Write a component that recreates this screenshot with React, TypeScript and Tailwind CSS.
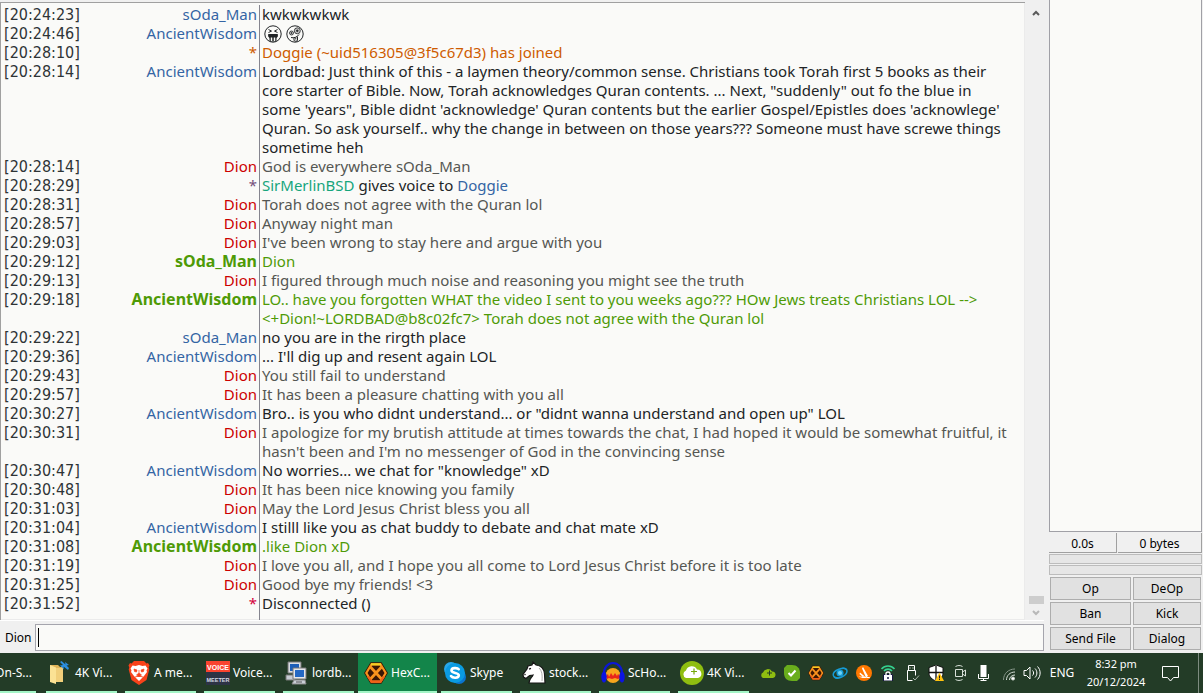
import { useState } from "react";
import type { ReactNode } from "react";

type Line = {
  time: string;
  nick: string;
  nickColor: string;
  text: ReactNode;
  color: string;
};

const BLUE = "text-[#3465a4]";
const RED = "text-[#cc0000]";
const ME = "text-[16px] text-[#4e9a06] font-bold";
const BLACK = "text-[#212426]";
const GREY = "text-[#555753]";
const GREEN = "text-[#4e9a06]";

const soda = (time: string, text: ReactNode): Line => ({ time, nick: "sOda_Man", nickColor: BLUE, text, color: BLACK });
const wisdom = (time: string, text: ReactNode): Line => ({ time, nick: "AncientWisdom", nickColor: BLUE, text, color: BLACK });
const dion = (time: string, text: ReactNode): Line => ({ time, nick: "Dion", nickColor: RED, text, color: GREY });
const highlight = (time: string, nick: string, text: ReactNode): Line => ({ time, nick, nickColor: ME, text, color: GREEN });

function Emojis() {
  return (
    <span className="flex h-[19px] items-center gap-1 pl-0.5">
      <svg width="18" height="18" viewBox="0 0 18 18" fill="none" stroke="#212426" role="img" aria-label="squinting face with tongue">
        <circle cx="9" cy="9" r="8.2" />
        <path d="M4.5 4.5l3 1.6-3 1.4M13.5 4.5l-3 1.6 3 1.4" />
        <path d="M4.500 9.500h9c0 2-.5 3-1.500 3.500V16H6v-3c-1-.5-1.500-1.500-1.500-3.500z" fill="#212426" />
        <path d="M7.500 12.500v3.500M10.500 12.500v3.500" stroke="#fafaf8" strokeWidth="1.500" />
      </svg>
      <svg width="18" height="18" viewBox="0 0 18 18" fill="none" stroke="#212426" role="img" aria-label="zany face">
        <circle cx="9" cy="9" r="8.2" />
        <circle cx="11.300" cy="5.800" r="3" fill="#c4c4c4" strokeWidth=".8" />
        <circle cx="5.500" cy="8" r="2" fill="#c4c4c4" strokeWidth=".8" />
        <circle cx="11.300" cy="5.800" r=".8" fill="#212426" />
        <circle cx="5.500" cy="8" r=".4" fill="#212426" />
        <path d="M5 12.500c3 .8 6-.2 8-3M8 12.500v2.700c0 1.400 3.500 1.400 3.500 0v-3.700M9.800 12.500v2" />
      </svg>
    </span>
  );
}

const lines: Line[] = [
  soda("20:24:23", "kwkwkwkwk"),
  wisdom("20:24:46", <Emojis />),
  { time: "20:28:10", nick: "*", nickColor: "text-[#ce5c00]", text: "Doggie (~uid516305@3f5c67d3) has joined", color: "text-[#ce5c00]" },
  wisdom(
    "20:28:14",
    <>
      Lordbad: Just think of this - a laymen theory/common sense. Christians took Torah first 5 books as their<br />
      core starter of Bible. Now, Torah acknowledges Quran contents. ... Next, "suddenly" out fo the blue in<br />
      some 'years", Bible didnt 'acknowledge' Quran contents but the earlier Gospel/Epistles does 'acknowlege'<br />
      Quran. So ask yourself.. why the change in between on those years??? Someone must have screwe things<br />
      sometime heh
    </>,
  ),
  dion("20:28:14", "God is everywhere sOda_Man"),
  {
    time: "20:28:29",
    nick: "*",
    nickColor: "text-[#75507b]",
    text: (
      <>
        <span className="text-[#16a57c]">SirMerlinBSD</span> gives voice to <span className={BLUE}>Doggie</span>
      </>
    ),
    color: BLACK,
  },
  dion("20:28:31", "Torah does not agree with the Quran lol"),
  dion("20:28:57", "Anyway night man"),
  dion("20:29:03", "I've been wrong to stay here and argue with you"),
  highlight("20:29:12", "sOda_Man", "Dion"),
  dion("20:29:13", "I figured through much noise and reasoning you might see the truth"),
  highlight(
    "20:29:18",
    "AncientWisdom",
    <>
      LO.. have you forgotten WHAT the video I sent to you weeks ago??? HOw Jews treats Christians LOL --&gt;<br />
      &lt;+Dion!~LORDBAD@b8c02fc7&gt; Torah does not agree with the Quran lol
    </>,
  ),
  soda("20:29:22", "no you are in the rirgth place"),
  wisdom("20:29:36", "... I'll dig up and resent again LOL"),
  dion("20:29:43", "You still fail to understand"),
  dion("20:29:57", "It has been a pleasure chatting with you all"),
  wisdom("20:30:27", 'Bro.. is you who didnt understand... or "didnt wanna understand and open up" LOL'),
  dion(
    "20:30:31",
    <>
      I apologize for my brutish attitude at times towards the chat, I had hoped it would be somewhat fruitful, it<br />
      hasn't been and I'm no messenger of God in the convincing sense
    </>,
  ),
  wisdom("20:30:47", 'No worries... we chat for "knowledge" xD'),
  dion("20:30:48", "It has been nice knowing you family"),
  dion("20:31:03", "May the Lord Jesus Christ bless you all"),
  wisdom("20:31:04", "I stilll like you as chat buddy to debate and chat mate xD"),
  highlight("20:31:08", "AncientWisdom", ".like Dion xD"),
  dion("20:31:19", "I love you all, and I hope you all come to Lord Jesus Christ before it is too late"),
  dion("20:31:25", "Good bye my friends! <3"),
  { time: "20:31:52", nick: "*", nickColor: "text-[#d4003c]", text: "Disconnected ()", color: BLACK },
];

function ChatLog() {
  return (
    <ol className="flex min-w-0 flex-1 flex-col border-t border-l border-[#a0a0a0] bg-[#fafaf8] pt-0.5 text-[15px] leading-[19px] shadow-[inset_-1px_-1px_0_#ebebeb]">
      {lines.map((l, i) => (
        <li key={i} className="flex last:flex-1">
          <div className="flex w-[259px] shrink-0 justify-between border-r border-[#85858f] pr-0.5 pl-[3px]">
            <time className="font-['DejaVu_Sans_Condensed',sans-serif] text-[16px] text-[#2e3436]">[{l.time}]</time>
            <span className={l.nickColor}>{l.nick}</span>
          </div>
          <div className={`min-w-0 flex-1 pl-0.5 whitespace-nowrap ${l.color}`}>{l.text}</div>
        </li>
      ))}
    </ol>
  );
}

function Scrollbar() {
  return (
    <div className="ml-[3px] flex w-4 flex-col items-center bg-[#f0f0f0] pt-2 pb-1">
      <svg width="8" height="6" viewBox="0 0 8 6" fill="none" stroke="#5a5a5a" strokeWidth="2">
        <path d="M1 5l3-3 3 3" />
      </svg>
      <div className="mt-auto mb-1.5 h-2 w-[15px] bg-[#cdcdcd]" />
      <svg width="8" height="6" viewBox="0 0 8 6" fill="none" stroke="#b8b8b8" strokeWidth="2">
        <path d="M1 1l3 3 3-3" />
      </svg>
    </div>
  );
}

function UserPane() {
  const buttons = ["Op", "DeOp", "Ban", "Kick", "Send File", "Dialog"];
  return (
    <aside className="flex w-[154px] shrink-0 flex-col pr-px text-[12px] text-black">
      <div className="flex-1 border-r border-b border-l border-[#a0a0a6] bg-[#fafaf8]" />
      <div className="mt-px flex h-5 gap-px text-center leading-[21px]">
        <div className="w-[68px] border-r border-b border-[#a0a0a0]">0.0s</div>
        <div className="flex-1 border-r border-b border-[#a0a0a0]">0 bytes</div>
      </div>
      <div className="mt-px h-2.5 border border-[#bcbcbc] bg-[#e6e6e6]" />
      <div className="mt-px h-2.5 border border-[#bcbcbc] bg-[#e6e6e6]" />
      <div className="grid grid-cols-[81px_1fr] gap-0.5 px-px pt-0.5 pb-[3px]">
        {buttons.map((b) => (
          <button key={b} type="button" className="h-[23px] border border-[#adadad] bg-[#e1e1e1] leading-[21px]">
            {b}
          </button>
        ))}
      </div>
    </aside>
  );
}

/* ---------- taskbar icons ---------- */

function FolderIcon() {
  return (
    <svg width="24" height="24" viewBox="0 0 24 24">
      <path d="M2 4h8l2 2h3v15H2z" fill="#e0b458" />
      <path d="M2 4l6 2.500V23l-6-2z" fill="#fbe294" />
      <path d="M8 7h7v14H8z" fill="#f1cf7a" />
      <path d="M12 1l1.500-1 4 3.500L17 1l4 3-2.500.5L21 7l-1 2-4.500-3.500.5 3-4-4 3-.5z" fill="#2b8ee0" />
    </svg>
  );
}

function BraveIcon() {
  return (
    <svg width="24" height="24" viewBox="0 0 24 24">
      <path d="M7 0h10l2.500 2.500L21 2l1.500 2.500-.8 2 .6 2L19.500 19 12 24l-7.500-5L1.700 8.500l.6-2-.8-2L3 2l1.500.5z" fill="#f8421a" />
      <path d="M5.500 4.500l3 .5L12 4l3.500 1 3-.5 2 3-1 2 .5 1.500-3 4-1.500 1.500L12 20l-3.500-3.500L7 15l-3-4 .5-1.500-1-2z" fill="#fff" />
      <path d="M7 8l3 1-.5 2-2-.5zM17 8l-3 1 .5 2 2-.5zM12 9v3l-2.500 2 2.500 1.500 2.500-1.500L12 12M8 16l4-1 4 1" fill="#f8421a" stroke="#f8421a" strokeWidth=".7" />
    </svg>
  );
}

function VoiceIcon() {
  return (
    <svg width="24" height="24" viewBox="0 0 24 24" fontFamily="'Liberation Sans', sans-serif" fontWeight="bold" textAnchor="middle">
      <path d="M0 0h24v12H0z" fill="#f9432f" />
      <path d="M0 11h24v13H0z" fill="#2d3345" />
      <text x="12" y="8.500" fontSize="7" fill="#fff">VOICE</text>
      <text x="12" y="20.500" fontSize="5.500" fill="#d5dae6">MEETER</text>
    </svg>
  );
}

function PuttyIcon() {
  return (
    <svg width="24" height="24" viewBox="0 0 24 24">
      <path d="M3 1h13v11H3z" fill="#d9dde2" stroke="#777" />
      <path d="M5 3h9v7H5z" fill="#1d5fb8" />
      <path d="M1 14h9v5H1z" fill="#c6cbd2" stroke="#777" />
      <path d="M8 7h13v11H8z" fill="#e4e7eb" stroke="#777" />
      <path d="M10 9h9v7h-9z" fill="#2468c4" />
      <path d="M9 19h11l1 4H7z" fill="#c9ced6" stroke="#888" />
      <path d="M11 21h6" stroke="#555" />
    </svg>
  );
}

function HexIcon({ size = 24 }: { size?: number }) {
  return (
    <svg width={size} height={size} viewBox="0 0 24 24">
      <path d="M7 2h10l6 10-6 10H7L1 12z" fill="#3a1604" stroke="#3a1604" strokeWidth="1.600" />
      <path d="M7.500 3.300h9l5.200 8.700-5.200 8.700h-9L2.300 12z" fill="none" stroke="#f9931d" strokeWidth="2.200" />
      <path d="M6 5.500l12 13M18 5.500l-12 13" stroke="#f9931d" strokeWidth="2.800" />
      <path d="M7 3.300h10" stroke="#f5cf25" strokeWidth="2.200" />
      <path d="M4 15.500l3.500 5.200h9l3.500-5.200" fill="none" stroke="#f0601a" strokeWidth="2.200" />
    </svg>
  );
}

function SkypeIcon() {
  return (
    <svg width="24" height="24" viewBox="0 0 24 24">
      <circle cx="8" cy="8" r="7" fill="#28a8ea" />
      <circle cx="16" cy="16" r="7" fill="#0b74cf" />
      <circle cx="12" cy="12" r="10" fill="#0a9be2" />
      <path d="M15.700 8.200C14.500 6.700 8.400 6.500 8.500 9.500c.1 3 7.300 1.800 7.300 4.800 0 3.200-6.300 3-7.800.8" fill="none" stroke="#fff" strokeWidth="2.600" strokeLinecap="round" />
    </svg>
  );
}

function HorseIcon() {
  return (
    <svg width="24" height="24" viewBox="0 0 24 24">
      <path d="M10 4l1-3 3 3c5 .5 8 4 8.500 9l.5 9H7c0-4 3-5.500 4-8-2 .5-3 0-4 1l-3 2.500-2.500-1.500L1 13.500 5 8l1-3z" fill="#fff" stroke="#161616" strokeWidth="1.200" />
      <path d="M7 8.200l2-.8M2.500 14l1-.8" stroke="#161616" strokeWidth="1.300" />
      <path d="M17 7c3 3 3.500 7 3 13" fill="none" stroke="#aaa" />
    </svg>
  );
}

function AudacityIcon() {
  return (
    <svg width="24" height="24" viewBox="0 0 24 24">
      <ellipse cx="12" cy="14.500" rx="7.500" ry="7.500" fill="#f7a51c" />
      <path d="M5 15l2-2 1 3 2-4 2 3 2-3 2 3 1-2 2 2v2l-2 1-3-1-3 1-3-1-2 1z" fill="#e8251b" />
      <path d="M3 14C2 -2 22 -2 21 14" fill="none" stroke="#0b17d8" strokeWidth="2.200" />
      <ellipse cx="3" cy="16" rx="2.700" ry="5.500" fill="#0c14e4" />
      <ellipse cx="21" cy="16" rx="2.700" ry="5.500" fill="#0c14e4" />
    </svg>
  );
}

function VideoIcon() {
  return (
    <svg width="24" height="24" viewBox="0 0 24 24">
      <circle cx="12" cy="12" r="12" fill="#8fbe10" />
      <path d="M6 17a4 4 0 010-7.500 6 6 0 0111-1 4.300 4.300 0 011 8.500z" fill="#fff" />
      <path d="M14 7.500v6M11 10.500h6" stroke="#74a80b" strokeWidth="1.200" />
    </svg>
  );
}

const tasks = [
  { label: "4K Vi...", icon: <FolderIcon /> },
  { label: "A me...", icon: <BraveIcon /> },
  { label: "Voice...", icon: <VoiceIcon /> },
  { label: "lordb...", icon: <PuttyIcon /> },
  { label: "HexC...", icon: <HexIcon />, active: true },
  { label: "Skype", icon: <SkypeIcon /> },
  { label: "stock...", icon: <HorseIcon /> },
  { label: "ScHo...", icon: <AudacityIcon /> },
  { label: "4K Vi...", icon: <VideoIcon /> },
];

const tray = [
  {
    name: "4K Download",
    icon: (
      <svg width="16" height="16" viewBox="0 0 16 16">
        <path d="M3 13a3 3 0 010-5.500 5 5 0 019-1 3.300 3.300 0 011 6.500z" fill="#8fbe10" />
        <path d="M9.500 5.500v5M7 8h5" stroke="#233c27" />
      </svg>
    ),
  },
  {
    name: "Skype status",
    icon: (
      <svg width="16" height="16" viewBox="0 0 16 16">
        <path d="M3 0h5c5 0 8 3 8 8v5l-3 3H8c-5 0-8-3-8-8V3z" fill="#69ad1c" />
        <path d="M4.500 8l2.500 2.500 4.500-5" fill="none" stroke="#fff" strokeWidth="2" />
      </svg>
    ),
  },
  { name: "HexChat", icon: <HexIcon size={16} /> },
  {
    name: "Monitor",
    icon: (
      <svg width="16" height="16" viewBox="0 0 16 16" fill="none" stroke="#169bd5" strokeWidth="1.500">
        <path d="M14 4.500C12 1.500 1 5 1.200 10c.2 2.500 4 3.200 5 3" />
        <path d="M2 12c3 3 13-1 13-6 0-2-2-3.500-5-2.500" />
        <circle cx="8" cy="8" r="2.800" fill="#6fd2f5" />
      </svg>
    ),
  },
  {
    name: "Avast",
    icon: (
      <svg width="16" height="16" viewBox="0 0 16 16">
        <circle cx="8" cy="8" r="8" fill="#ff7800" />
        <path d="M7 2l5 9-2 1.500L6 3.500zM4 7.500L9.500 12H7L3.500 9zM2.500 11.500l4 1.500h7.500l-.5-1z" fill="#fff" />
      </svg>
    ),
  },
  {
    name: "VPN",
    icon: (
      <svg width="16" height="16" viewBox="0 0 16 16" fill="none">
        <path d="M1.500 4C5 0 11 0 14.500 4M4 6c2-2.500 6-2.500 8 0" stroke="#35d18f" strokeWidth="1.600" />
        <path d="M3.500 9.500h9V16h-9z" fill="#fff" stroke="#15173f" />
        <path d="M6 10V8.500c0-2 4-2 4 0V10" stroke="#fff" strokeWidth="1.300" />
        <path d="M8 12v2" stroke="#15173f" strokeWidth="1.500" />
      </svg>
    ),
  },
  {
    name: "Safely remove hardware",
    icon: (
      <svg width="16" height="16" viewBox="0 0 16 16" fill="none" stroke="#fff">
        <path d="M4.500 5.500v-5h6v5M3.500 5.500h8v5M3.500 5.500v10h5M6 2.500v1M9 2.500v1" />
        <path d="M9 13l2 2 4-4.500" stroke="#a8b5aa" />
      </svg>
    ),
  },
  {
    name: "Windows Security",
    icon: (
      <svg width="16" height="16" viewBox="0 0 16 16">
        <path d="M8 0l7 2.500V8c0 4-3 6.500-7 8-4-1.500-7-4-7-8V2.500z" fill="#fff" stroke="#111" />
        <path d="M8 1v14M1 7.500h14" stroke="#111" strokeWidth="1.300" />
        <path d="M11.500 7.500L16 16H7z" fill="#ffc20e" />
        <path d="M11.500 10.500v3M11.500 14v1" stroke="#222" />
      </svg>
    ),
  },
  {
    name: "Camera",
    icon: (
      <svg width="16" height="16" viewBox="0 0 16 16" fill="none" stroke="#d8e0d9">
        <path d="M3.500 4.500h7v7h-7zM10.500 7l3-2v6l-3-2M3.500 1.500c2-1.300 5-1.300 7 0M3.500 14.500c2 1.300 5 1.300 7 0" />
      </svg>
    ),
  },
  {
    name: "Microphone",
    icon: (
      <svg width="16" height="16" viewBox="0 0 16 16" fill="none" stroke="#fff">
        <path d="M4.500 0h6v12h-6z" fill="#fff" stroke="none" />
        <path d="M2.500 9v4.500h10V9M7.500 13v2.500M4.500 15.500h6" />
      </svg>
    ),
  },
  {
    name: "Wi-Fi",
    icon: (
      <svg width="16" height="16" viewBox="0 0 16 16" fill="none" stroke="#d8e0d9">
        <path d="M3.500 15C3.500 8.500 8.500 4 15 4" stroke="#87968a" />
        <path d="M6.500 15c0-4.500 3.500-8 8.500-8M9.500 15c0-3 2.500-5 5.500-5" />
        <circle cx="13" cy="13.500" r="1.500" fill="#fff" />
      </svg>
    ),
  },
  {
    name: "Volume",
    icon: (
      <svg width="18" height="16" viewBox="0 0 18 16" fill="none" stroke="#fff">
        <path d="M1 5.500h2.500L7 2v12l-3.500-3.500H1zM9.500 5.500c1.500 1.500 1.500 3.500 0 5M12 3.500c2.500 2.500 2.500 6.500 0 9M14.500 1.500c3.500 3.500 3.500 9.500 0 13" />
      </svg>
    ),
  },
];

function Taskbar() {
  return (
    <footer className="flex h-10 overflow-hidden bg-[#233c27] text-[12px] text-white">
      <button type="button" className="relative flex w-[42px] shrink-0 items-center justify-end overflow-hidden pr-2.5 whitespace-nowrap">
        On-S...
        <span className="absolute bottom-0 left-0 h-0.5 w-9 bg-[#a3f5c6]" />
      </button>
      {tasks.map((t, i) => (
        <button
          key={i}
          type="button"
          className={`relative flex w-[79px] shrink-0 items-center gap-[3px] pl-1.5 whitespace-nowrap ${t.active ? "bg-[#13854a]" : ""}`}
        >
          {t.icon}
          {t.label}
          <span className={`absolute bottom-0 h-0.5 bg-[#a3f5c6] ${t.active ? "inset-x-0" : "inset-x-1"}`} />
        </button>
      ))}
      <div className="ml-auto flex items-center">
        {tray.map((t) => (
          <button key={t.name} type="button" aria-label={t.name} className="flex h-10 w-6 items-center justify-center">
            {t.icon}
          </button>
        ))}
        <button type="button" className="h-10 w-9">ENG</button>
        <button type="button" className="h-10 w-[72px] text-center text-[11px] leading-[18px]">
          8:32 pm
          <br />
          20/12/2024
        </button>
        <button type="button" aria-label="Notifications" className="flex h-10 w-[46px] items-center pl-2.5">
          <svg width="17" height="17" viewBox="0 0 17 17" fill="none" stroke="#fff">
            <path d="M.5 1.500h16v11h-5l-3 3.500-3-3.500h-5z" />
          </svg>
        </button>
        <div className="h-10 w-[5px] border-l border-[#7d8c80]" />
      </div>
    </footer>
  );
}

export default function App() {
  const [message, setMessage] = useState("");

  return (
    <div className="flex min-h-screen flex-col bg-[#f0f0f0] font-['Noto_Sans',sans-serif]">
      <main className="flex flex-1 gap-[5px]">
        <div className="flex min-w-0 flex-1 flex-col">
          <div className="flex flex-1 border-b border-white pt-0.5">
            <ChatLog />
            <Scrollbar />
          </div>
          <form className="flex items-center gap-[3px] pt-[3px] pb-0.5 pl-[5px]" onSubmit={(e) => e.preventDefault()}>
            <label htmlFor="message" className="text-[12px] text-black">
              Dion
            </label>
            <div className="relative flex min-w-0 flex-1">
              <input
                id="message"
                type="text"
                value={message}
                onChange={(e) => setMessage(e.target.value)}
                className="h-[27px] min-w-0 flex-1 border border-[#a5a5ad] bg-[#fafaf8] px-[3px] text-[15px] outline-none"
              />
              {message === "" && <span className="pointer-events-none absolute top-1 left-[3px] h-[19px] w-px bg-black" />}
            </div>
          </form>
        </div>
        <UserPane />
      </main>
      <Taskbar />
    </div>
  );
}
